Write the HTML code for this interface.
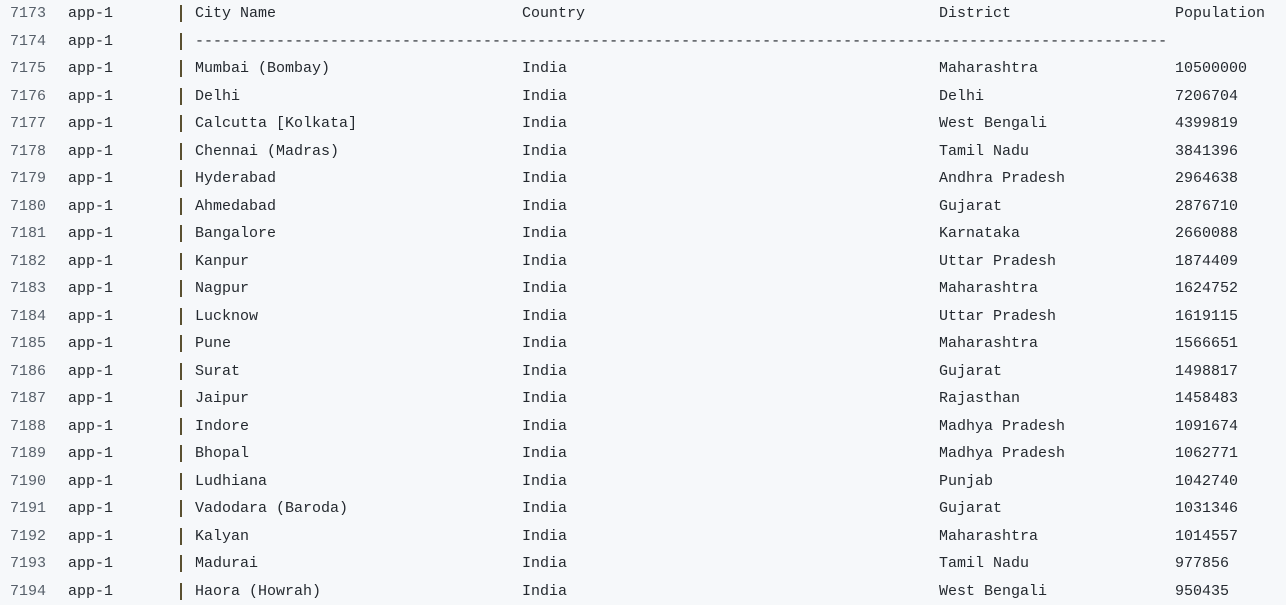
<!DOCTYPE html><html><head><style>
body{margin:0;width:1286px;height:599px;background:#f6f8fa;overflow:hidden;font-family:"Liberation Mono",monospace;font-size:15px;color:#24292f}
.r{position:absolute;left:0;height:27.5px;width:1286px}
.r span{position:absolute;top:0;line-height:27.5px;white-space:pre}
.n{left:10px;color:#57606a}.a{left:68px}.c{left:195px}.k{left:522px}.d{left:939px}.p{left:1175px}
.b{position:absolute;left:180px;top:5px;width:2px;height:17px;background:#5a5030}
</style></head><body>
<div id="w"></div>
<script>
var rows=[["7173","City Name","Country","District","Population"],["7174","-".repeat(108),"","",""],
["7175","Mumbai (Bombay)","India","Maharashtra","10500000"],["7176","Delhi","India","Delhi","7206704"],
["7177","Calcutta [Kolkata]","India","West Bengali","4399819"],["7178","Chennai (Madras)","India","Tamil Nadu","3841396"],
["7179","Hyderabad","India","Andhra Pradesh","2964638"],["7180","Ahmedabad","India","Gujarat","2876710"],
["7181","Bangalore","India","Karnataka","2660088"],["7182","Kanpur","India","Uttar Pradesh","1874409"],
["7183","Nagpur","India","Maharashtra","1624752"],["7184","Lucknow","India","Uttar Pradesh","1619115"],
["7185","Pune","India","Maharashtra","1566651"],["7186","Surat","India","Gujarat","1498817"],
["7187","Jaipur","India","Rajasthan","1458483"],["7188","Indore","India","Madhya Pradesh","1091674"],
["7189","Bhopal","India","Madhya Pradesh","1062771"],["7190","Ludhiana","India","Punjab","1042740"],
["7191","Vadodara (Baroda)","India","Gujarat","1031346"],["7192","Kalyan","India","Maharashtra","1014557"],
["7193","Madurai","India","Tamil Nadu","977856"],["7194","Haora (Howrah)","India","West Bengali","950435"]];
var h="";rows.forEach(function(r,i){h+='<div class="r" style="top:'+(i*27.5)+'px"><span class="n">'+r[0]+'</span><span class="a">app-1</span><i class="b"></i><span class="c">'+r[1]+'</span><span class="k">'+r[2]+'</span><span class="d">'+r[3]+'</span><span class="p">'+r[4]+'</span></div>'});
document.getElementById("w").innerHTML=h;
</script>
</body></html>
